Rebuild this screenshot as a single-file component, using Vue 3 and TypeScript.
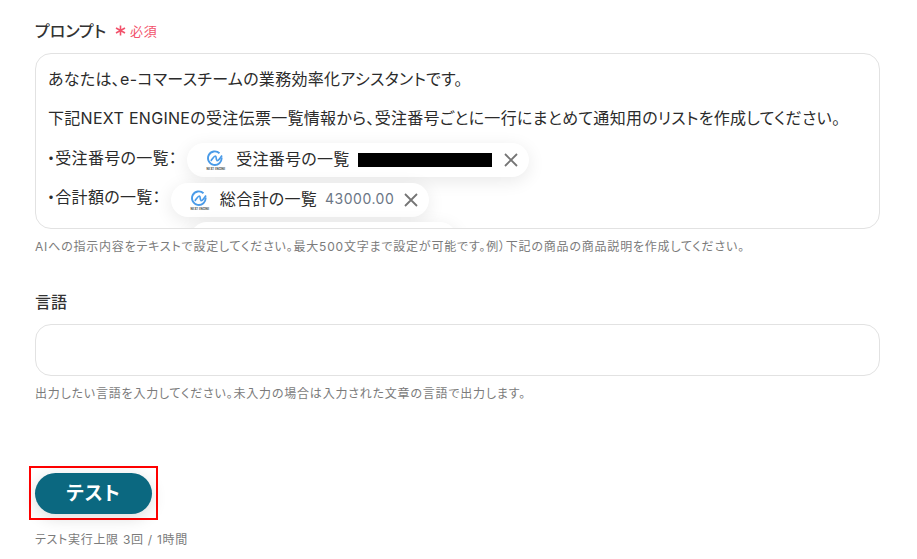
<script setup lang="ts">
interface Row {
  title: string
  label: string
  value?: string
  masked?: boolean
}

const rows: Row[] = [
  { title: '・受注番号の一覧：', label: '受注番号の一覧', masked: true },
  { title: '・合計額の一覧：', label: '総合計の一覧', value: '43000.00' },
]
</script>

<template>
  <div class="page">
    <div class="label-row">
      <span class="label">プロンプト</span>
      <span class="required">
        <svg class="mark" width="11" height="11" viewBox="0 0 11 11">
          <path d="M5.5 0.5 V10.5 M1 3 L10 8 M10 3 L1 8" stroke="#f2526b" stroke-width="1.6" fill="none" />
        </svg>
        必須
      </span>
    </div>
    <div class="box prompt">
      <p>あなたは、e-コマースチームの業務効率化アシスタントです。</p>
      <p>下記NEXT ENGINEの受注伝票一覧情報から、受注番号ごとに一行にまとめて通知用のリストを作成してください。</p>
      <div v-for="row in rows" :key="row.title" class="line">
        <span class="line-title">{{ row.title }}</span>
        <span class="chip">
          <svg class="logo" width="20" height="20" viewBox="0 0 20 20">
            <path d="M13.5 3.2 A6.8 6.8 0 1 0 15.6 7.5" fill="none" stroke="#4a9be8" stroke-width="1.9" />
            <path d="M4.8 10.8 C6.5 9 8 6 9.5 6 C10.6 6 9.8 10 11 10.6 C12 11 14 8.5 16 5.5" fill="none" stroke="#4a9be8" stroke-width="1.7" />
            <text x="10" y="19.5" text-anchor="middle" class="logo-text">NEXT ENGINE</text>
          </svg>
          <span class="chip-label">{{ row.label }}</span>
          <span v-if="row.value" class="chip-value">{{ row.value }}</span>
          <span v-if="row.masked" class="masked"></span>
          <svg class="close" width="14" height="14" viewBox="0 0 14 14">
            <path d="M1 1 L13 13 M13 1 L1 13" stroke="#757575" stroke-width="1.8" fill="none" />
          </svg>
        </span>
      </div>
      <div class="line">
        <span class="chip chip-cut"></span>
      </div>
    </div>
    <p class="hint">AIへの指示内容をテキストで設定してください。最大500文字まで設定が可能です。例）下記の商品の商品説明を作成してください。</p>

    <div class="label-row second">
      <span class="label">言語</span>
    </div>
    <div class="box language"></div>
    <p class="hint">出力したい言語を入力してください。未入力の場合は入力された文章の言語で出力します。</p>

    <div class="highlight">
      <button class="test-btn" type="button">テスト</button>
    </div>
    <p class="limit">テスト実行上限 3回 / 1時間</p>
  </div>
</template>

<style scoped>
.page {
  width: 845px;
  padding: 18px 0 0 35px;
  font-family: Inter, "Noto Sans CJK JP", "Noto Sans", sans-serif;
  font-feature-settings: "palt";
  color: #2b2b2b;
}

.label-row {
  display: flex;
  align-items: center;
  gap: 9px;
  height: 24px;
}

.label {
  font-size: 16px;
  font-weight: 500;
  color: #333;
}

.required {
  font-size: 13px;
  letter-spacing: 0.6px;
  color: #f2526b;
  display: flex;
  align-items: center;
  gap: 4px;
}

.box {
  box-sizing: border-box;
  margin-top: 11px;
  border: 1px solid #e2e2e2;
  border-radius: 16px;
  background: #fff;
}

.prompt {
  height: 176px;
  overflow: hidden;
  padding: 14px 12px 0;
  font-size: 16px;
  letter-spacing: 0.3px;
}

.prompt p {
  margin: 0 0 17px;
  line-height: 22px;
}

.line {
  display: flex;
  align-items: center;
  height: 34px;
  margin-top: -3px;
  margin-bottom: 8.5px;
}

.line-title {
  margin-left: -1px;
  margin-top: -7px;
  margin-right: 10px;
}

.chip {
  display: flex;
  align-items: center;
  flex: none;
  height: 34px;
  box-sizing: border-box;
  padding: 0 11px 0 19px;
  background: #fff;
  border-radius: 17px;
  box-shadow: 0 4px 18px rgba(0, 0, 0, 0.09);
}

.chip-cut {
  width: 267px;
  margin-left: 142px;
}

.logo {
  margin-right: 10px;
}

.logo-text {
  font-size: 2.8px;
  font-weight: 700;
  fill: #444;
  letter-spacing: 0;
}

.chip-label {
  margin-top: -4px;
  margin-right: 8px;
}

.chip-value {
  margin-top: -2px;
  font-size: 14px;
  color: #6b7685;
  margin-right: 10px;
  letter-spacing: 0.5px;
}

.masked {
  width: 134px;
  height: 14px;
  background: #000;
  margin-right: 12px;
}

.close {
  flex: none;
}

.hint {
  margin: 10px 0 0;
  font-size: 12px;
  letter-spacing: 0.8px;
  line-height: 16px;
  color: #7b7b7b;
}

.second {
  margin-top: 34px;
}

.language {
  height: 52px;
}

.highlight {
  box-sizing: border-box;
  width: fit-content;
  margin: 64px 0 0 -6px;
  padding: 5px 4px 3.5px;
  border: 2px solid #f00;
}

.test-btn {
  display: block;
  width: 117px;
  height: 41px;
  padding: 0 0 5px;
  border: none;
  border-radius: 21px;
  background: #0b6880;
  color: #fff;
  font-family: inherit;
  font-feature-settings: inherit;
  font-size: 19px;
  font-weight: 700;
  letter-spacing: 1px;
  box-shadow: 0 4px 16px rgba(0, 0, 0, 0.14);
}

.limit {
  margin: 12px 0 0;
  font-size: 12px;
  letter-spacing: 0.7px;
  line-height: 16px;
  color: #7b7b7b;
}
</style>
